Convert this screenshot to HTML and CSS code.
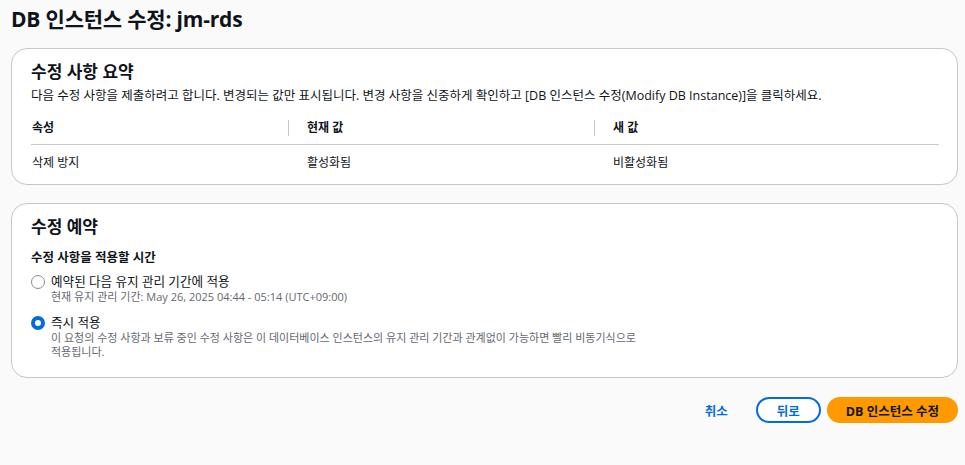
FILE: index.html
```html
<!DOCTYPE html>
<html lang="ko">
<head>
<meta charset="utf-8">
<title>DB 인스턴스 수정</title>
<link rel="stylesheet" href="styles.css">
</head>
<body>
<main class="page">
  <h1 class="title">DB 인스턴스 수정: jm-rds</h1>

  <section class="card card-summary">
    <h2 class="card-title">수정 사항 요약</h2>
    <p class="card-desc">다음 수정 사항을 제출하려고 합니다. 변경되는 값만 표시됩니다. 변경 사항을 신중하게 확인하고 [DB 인스턴스 수정(Modify DB Instance)]을 클릭하세요.</p>
    <div class="table">
      <div class="th">속성</div>
      <div class="th sep">현재 값</div>
      <div class="th sep">새 값</div>
      <div class="td">삭제 방지</div>
      <div class="td">활성화됨</div>
      <div class="td">비활성화됨</div>
    </div>
  </section>

  <section class="card card-schedule">
    <h2 class="card-title">수정 예약</h2>
    <div class="field-label">수정 사항을 적용할 시간</div>
    <div class="radio-group">
      <label class="radio">
        <span class="radio-dot"></span>
        <span class="radio-text">
          <span class="radio-label">예약된 다음 유지 관리 기간에 적용</span>
          <span class="radio-desc">현재 유지 관리 기간: May 26, 2025 04:44 - 05:14 (UTC+09:00)</span>
        </span>
      </label>
      <label class="radio">
        <span class="radio-dot checked"></span>
        <span class="radio-text">
          <span class="radio-label">즉시 적용</span>
          <span class="radio-desc narrow">이 요청의 수정 사항과 보류 중인 수정 사항은 이 데이터베이스 인스턴스의 유지 관리 기간과 관계없이 가능하면 빨리 비동기식으로 적용됩니다.</span>
        </span>
      </label>
    </div>
  </section>

  <div class="actions">
    <button class="btn btn-link">취소</button>
    <button class="btn btn-normal">뒤로</button>
    <button class="btn btn-primary">DB 인스턴스 수정</button>
  </div>
</main>
</body>
</html>
```

FILE: styles.css
```css
* { box-sizing: border-box; }
html, body {
  margin: 0;
  background: #fafafa;
}
body {
  font-family: "Open Sans", "Noto Sans CJK KR", sans-serif;
  color: #0f141a;
  font-size: 13px;
}
.page {
  padding: 6px 7px 0 11px;
}
.title {
  margin: 0;
  font-size: 21px;
  line-height: 26px;
  font-weight: 700;
  letter-spacing: -0.2px;
}
.card {
  background: #fff;
  border: 1px solid #c6c6cd;
  border-radius: 16px;
  padding: 10px 18px 13px 19px;
}
.card-summary {
  margin-top: 16px;
}
.card-schedule {
  margin-top: 18px;
  padding-top: 10px;
  padding-bottom: 18px;
}
.card-title {
  margin: 0;
  font-size: 17px;
  line-height: 26px;
  font-weight: 700;
}
.card-desc {
  margin: 0;
  font-size: 12.5px;
  line-height: 22px;
}
.table {
  margin-top: 5px;
  display: grid;
  grid-template-columns: 257px 306px 1fr;
}
.th {
  font-weight: 700;
  font-size: 12px;
  line-height: 16px;
  padding: 8px 0 8px 1px;
  border-bottom: 1px solid #c6c6cd;
  position: relative;
}
.th.sep {
  padding-left: 19px;
}
.th.sep::before {
  content: "";
  position: absolute;
  left: 0;
  top: 8px;
  height: 16px;
  border-left: 1px solid #c6c6cd;
}
.td {
  font-size: 12px;
  line-height: 16px;
  padding: 10px 0 0 1px;
}
.td + .td { padding-left: 19px; }
.field-label {
  margin-top: 9px;
  font-weight: 700;
  font-size: 12.5px;
  line-height: 18px;
}
.radio-group {
  display: flex;
  flex-direction: column;
  gap: 11px;
  margin-top: 7px;
}
.radio {
  display: flex;
  gap: 6px;
  align-items: flex-start;
}
.radio-dot {
  flex: none;
  width: 14px;
  height: 14px;
  margin-top: 1px;
  border: 1.5px solid #8c8c94;
  border-radius: 50%;
  background: #fff;
}
.radio-dot.checked {
  border: 4px solid #006ce0;
}
.radio-text {
  display: flex;
  flex-direction: column;
}
.radio-label {
  font-size: 12.6px;
  line-height: 16px;
}
.radio-desc {
  font-size: 11px;
  line-height: 14px;
  color: #656871;
}
.radio-desc.narrow {
  max-width: 585px;
}
.actions {
  display: flex;
  justify-content: flex-end;
  gap: 6px;
  margin-top: 19px;
}
.btn {
  font-family: inherit;
  font-size: 12.5px;
  font-weight: 700;
  height: 26px;
  border-radius: 20px;
  padding: 0 18px;
  border: 2px solid transparent;
  background: none;
  cursor: pointer;
  color: #006ce0;
}
.btn-link {
  padding: 0 20px;
}
.btn-normal {
  border-color: #006ce0;
  background: #fff;
  padding: 0 19px;
}
.btn-primary {
  background: #ff9900;
  border-color: #ff9900;
  color: #0f141a;
  padding: 0 17px;
}
```
